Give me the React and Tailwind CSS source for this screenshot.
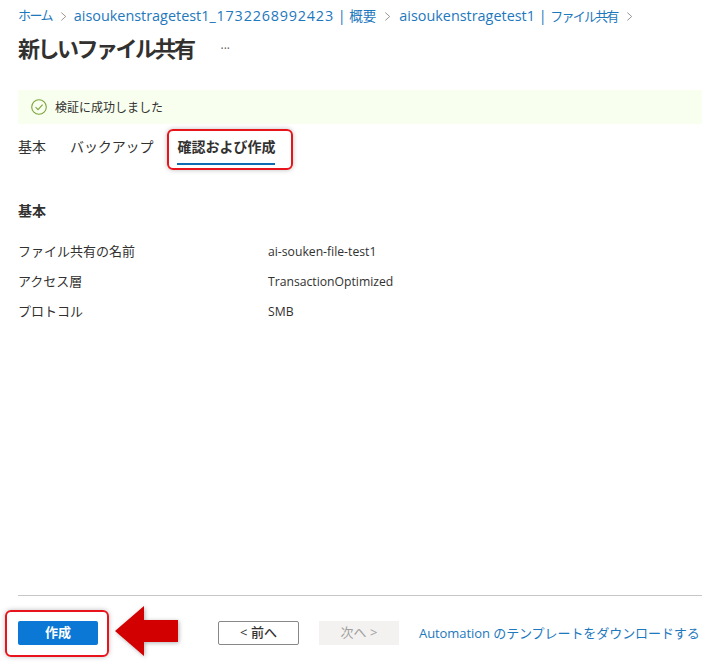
const font = { fontFamily: '"Open Sans","Noto Sans CJK JP",sans-serif' };

function Chevron({ className }) {
  return (
    <svg viewBox="0 0 8 12" className={className} fill="none" stroke="#8a8886" strokeWidth="1">
      <path d="M1.5 1.5 L6.5 6 L1.5 10.5" />
    </svg>
  );
}

function Row({ label, value }) {
  return (
    <div className="flex h-[30px] items-center">
      <div className="w-[250px] text-[13px] text-[#323130]">{label}</div>
      <div className="text-[12.2px] text-[#323130]">{value}</div>
    </div>
  );
}

export default function App() {
  return (
    <div className="relative flex h-[666px] w-[702px] flex-col overflow-hidden bg-white" style={font}>
      <nav className="mt-[8px] flex h-[16px] items-center pl-[18px] text-[14.4px] text-[#1d78bd] whitespace-nowrap">
        <span className="text-[13px] tracking-[-1.6px]">ホーム</span>
        <Chevron className="ml-[8px] mr-[7px] h-[11px] w-[7px]" />
        <span>aisoukenstragetest1<span className="tracking-[0.8px]">_1732268992423</span> | <span className="text-[13.5px]">概要</span></span>
        <Chevron className="mx-[8px] h-[11px] w-[7px]" />
        <span>aisoukenstragetest1 | <span className="text-[13px] tracking-[-1.8px]">ファイル共有</span></span>
        <Chevron className="mx-[8px] h-[11px] w-[7px]" />
      </nav>

      <header className="mt-[9px] flex h-[30px] items-center pl-[18px]">
        <h1 className="text-[22px] font-semibold tracking-[-2.5px] text-[#323130]">新しいファイル共有</h1>
        <span className="ml-[27px] mt-[2px] text-[12px] text-[#605e5c]">···</span>
      </header>

      <div className="mt-[27px] ml-[18px] flex h-[34px] items-center bg-[#f8ffef] pl-[13px]">
        <svg viewBox="0 0 16 16" className="h-[16px] w-[16px]" fill="none" stroke="#7da33c" strokeWidth="1.1">
          <circle cx="8" cy="8" r="7.3" />
          <path d="M4.6 8.2 L7 10.6 L11.6 5.6" />
        </svg>
        <span className="ml-[8px] mt-[1px] text-[12px] text-[#323130]">検証に成功しました</span>
      </div>

      <div className="flex h-[45px] items-start pl-[18px] pt-[12px] text-[14px] text-[#323130]">
        <span>基本</span>
        <span className="ml-[24px] tracking-[-0.1px]">バックアップ</span>
        <div className="ml-[24px] h-[29px] w-[98px] border-b-[2px] border-[#0f6cb0] text-[14px] font-semibold whitespace-nowrap">
          確認および作成
        </div>
      </div>

      <h2 className="mt-[31px] pl-[18px] text-[14px] font-semibold text-[#323130]">基本</h2>

      <div className="mt-[16px] pl-[18px]">
        <Row label="ファイル共有の名前" value="ai-souken-file-test1" />
        <Row label="アクセス層" value="TransactionOptimized" />
        <Row label="プロトコル" value="SMB" />
      </div>

      <div className="mt-auto ml-[18px] border-t border-[#c8c6c4]" />
      <footer className="flex h-[70px] items-start pl-[18px] pt-[25px]">
        <button className="h-[24px] w-[80px] rounded-[2px] bg-[#0a78d4] text-[13px] font-semibold text-white">作成</button>
        <button className="ml-[120px] h-[24px] w-[81px] rounded-[2px] border border-[#8a8886] bg-white text-[13px] text-[#323130]">&lt; <span className="font-medium">前へ</span></button>
        <button className="ml-[20px] h-[24px] w-[80px] bg-[#f3f2f1] text-[13px] text-[#a19f9d]">次へ &gt;</button>
        <a className="ml-[20px] text-[13px] leading-[24px] tracking-[-0.07px] text-[#1d78bd] whitespace-nowrap">Automation のテンプレートをダウンロードする</a>
      </footer>

      <div className="pointer-events-none absolute left-[167px] top-[129px] h-[41px] w-[126px] rounded-[6px] border-2 border-[#e8141c] shadow-[0_0_5px_rgba(0,0,0,0.25)]" />
      <div className="pointer-events-none absolute left-[5px] top-[610px] h-[47px] w-[104px] rounded-[6px] border-2 border-[#e8141c] shadow-[0_0_5px_rgba(0,0,0,0.25)]" />
      <svg className="pointer-events-none absolute left-[114px] top-[605px] drop-shadow-[1px_1px_2px_rgba(0,0,0,0.3)]" width="66" height="52" viewBox="0 0 66 52">
        <path d="M1 26 L30 1 L30 15 L64 15 L64 37 L30 37 L30 51 Z" fill="#d20000" />
      </svg>
    </div>
  );
}
